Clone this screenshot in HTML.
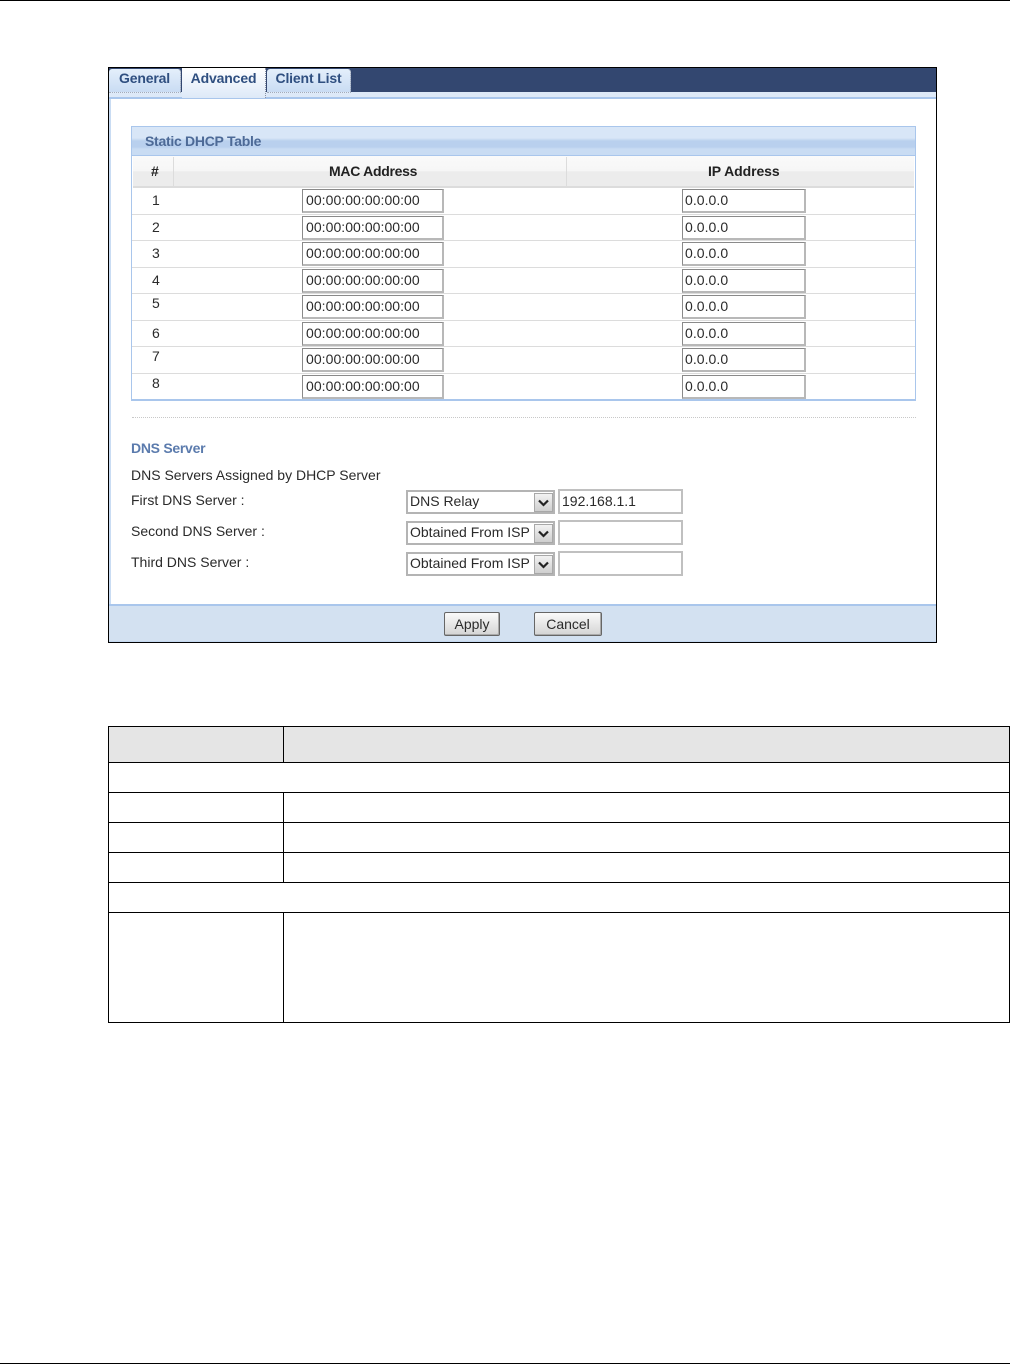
<!DOCTYPE html>
<html>
<head>
<meta charset="utf-8">
<style>
html,body{margin:0;padding:0;background:#fff;width:1010px;height:1364px;overflow:hidden}
body{position:relative;font-family:"Liberation Sans",sans-serif;font-size:14px;color:#2a2a2a}
div,span{position:absolute;box-sizing:border-box}
.wrap{left:0;top:0;width:1010px;height:660px;filter:blur(.3px)}
.t{white-space:nowrap;line-height:16px}
.b{font-weight:bold;letter-spacing:-.28px}
.inp{height:24px;background:#fff;border:1px solid #8a8a8a;border-right:2px solid #b8b8b8;border-bottom:2px solid #b8b8b8;padding-top:2px;line-height:16px;white-space:nowrap;letter-spacing:.05px}
.mac{left:302px;width:142px;padding-left:3px}
.ip{left:682px;width:124px;padding-left:2px}
.hl{left:132px;width:783px;height:1px;background:#dcdcdc}
.k{height:1px;background:#000}
.v{width:1px;background:#000}
.sel{left:406px;width:149px;height:24px;background:#fff;border:2px solid #b4b4b4;padding:2px 0 0 2px;line-height:15px;white-space:nowrap}
.arr{top:1px;right:0;width:19px;height:19px;background:linear-gradient(#f2f2f2,#cfcfcf);border:1px solid #a8a8a8}
.tx{left:558px;width:125px;height:25px;background:#fff;border:2px solid #c0c0c0;padding:2px 0 0 2px;line-height:16px;white-space:nowrap}
.tab{top:69px;height:24px;background:linear-gradient(#e4effb,#c9dcf3);border-right:1px dotted #8a93a5;border-bottom:1px dotted #a3abba;color:#2f4f80;font-weight:bold;letter-spacing:-.15px;text-align:center;line-height:19px;white-space:nowrap;border-radius:3px 3px 0 0}
.btn{top:612px;height:24px;background:linear-gradient(#fafafa,#d4d4d4);border:1px solid #666;border-radius:2px;box-shadow:inset -1px -1px 0 #aaa;text-align:center;line-height:23px}
</style>
</head>
<body>
<div class="k" style="left:0;top:0;width:1010px"></div>
<div class="k" style="left:0;top:1363px;width:1010px"></div>

<div class="wrap">
<div style="left:109px;top:68px;width:828px;height:24px;background:#334770"></div>
<div style="left:109px;top:92px;width:828px;height:5px;background:#dde9f8"></div>
<div style="left:109px;top:97px;width:828px;height:2px;background:#a9c6ec"></div>
<div style="left:109px;top:99px;width:2px;height:505px;background:#c9dcf3"></div>

<div class="tab" style="left:109px;width:72px">General</div>
<div style="left:182px;top:68px;width:84px;height:30px;background:linear-gradient(#fff,#dde9f8);border-right:1px dotted #8a93a5;color:#2f4f80;font-weight:bold;letter-spacing:-.15px;text-align:center;line-height:21px;white-space:nowrap">Advanced</div>
<div class="tab" style="left:267px;width:84px">Client List</div>

<!-- Static DHCP panel -->
<div style="left:131px;top:126px;width:785px;height:275px;border:1px solid #a9c6ec;border-bottom-width:2px;background:#fff"></div>
<div style="left:132px;top:127px;width:783px;height:29px;background:linear-gradient(#d8e6f7 0,#d8e6f7 11px,#b9d0ee 14px,#b9d0ee 20px,#c9dcf3 22px,#c9dcf3 100%);border-bottom:1px solid #a9c6ec"></div>
<div class="t b" style="left:145px;top:133px;color:#4d6a97">Static DHCP Table</div>
<div style="left:133px;top:156px;width:781px;height:32px;background:linear-gradient(#fafafa 0,#f6f6f6 50%,#ececec 52%,#ececec 100%);border-bottom:2px solid #dcdcdc"></div>
<div style="left:173px;top:157px;width:1px;height:30px;background:#dcdcdc"></div>
<div style="left:566px;top:157px;width:1px;height:30px;background:#dcdcdc"></div>
<div class="t b" style="left:151px;top:163px;color:#222">#</div>
<div class="t b" style="left:329px;top:163px;color:#222">MAC Address</div>
<div class="t b" style="left:708px;top:163px;color:#222;letter-spacing:-.08px">IP Address</div>

<div class="hl" style="top:214px"></div>
<div class="hl" style="top:240px"></div>
<div class="hl" style="top:267px"></div>
<div class="hl" style="top:293px"></div>
<div class="hl" style="top:320px"></div>
<div class="hl" style="top:346px"></div>
<div class="hl" style="top:373px"></div>

<div class="t" style="left:152px;top:192px">1</div>
<div class="t" style="left:152px;top:219px">2</div>
<div class="t" style="left:152px;top:245px">3</div>
<div class="t" style="left:152px;top:272px">4</div>
<div class="t" style="left:152px;top:295px">5</div>
<div class="t" style="left:152px;top:325px">6</div>
<div class="t" style="left:152px;top:348px">7</div>
<div class="t" style="left:152px;top:375px">8</div>

<div class="inp mac" style="top:189px">00:00:00:00:00:00</div>
<div class="inp mac" style="top:216px">00:00:00:00:00:00</div>
<div class="inp mac" style="top:242px">00:00:00:00:00:00</div>
<div class="inp mac" style="top:269px">00:00:00:00:00:00</div>
<div class="inp mac" style="top:295px">00:00:00:00:00:00</div>
<div class="inp mac" style="top:322px">00:00:00:00:00:00</div>
<div class="inp mac" style="top:348px">00:00:00:00:00:00</div>
<div class="inp mac" style="top:375px">00:00:00:00:00:00</div>

<div class="inp ip" style="top:189px">0.0.0.0</div>
<div class="inp ip" style="top:216px">0.0.0.0</div>
<div class="inp ip" style="top:242px">0.0.0.0</div>
<div class="inp ip" style="top:269px">0.0.0.0</div>
<div class="inp ip" style="top:295px">0.0.0.0</div>
<div class="inp ip" style="top:322px">0.0.0.0</div>
<div class="inp ip" style="top:348px">0.0.0.0</div>
<div class="inp ip" style="top:375px">0.0.0.0</div>

<div style="left:132px;top:417px;width:784px;height:1px;border-top:1px dotted #c8c8c8"></div>

<div class="t b" style="left:131px;top:440px;color:#5b7bad">DNS Server</div>
<div class="t" style="left:131px;top:467px">DNS Servers Assigned by DHCP Server</div>
<div class="t" style="left:131px;top:492px">First DNS Server :</div>
<div class="t" style="left:131px;top:523px">Second DNS Server :</div>
<div class="t" style="left:131px;top:554px">Third DNS Server :</div>

<div class="sel" style="top:490px">DNS Relay<span class="arr"><svg width="17" height="17" style="position:absolute;left:0;top:0"><path d="M4 6.500l4.500 4.500L13 6.500" fill="none" stroke="#222" stroke-width="2.200"/></svg></span></div>
<div class="sel" style="top:521px">Obtained From ISP<span class="arr"><svg width="17" height="17" style="position:absolute;left:0;top:0"><path d="M4 6.500l4.500 4.500L13 6.500" fill="none" stroke="#222" stroke-width="2.200"/></svg></span></div>
<div class="sel" style="top:552px">Obtained From ISP<span class="arr"><svg width="17" height="17" style="position:absolute;left:0;top:0"><path d="M4 6.500l4.500 4.500L13 6.500" fill="none" stroke="#222" stroke-width="2.200"/></svg></span></div>
<div class="tx" style="top:489px">192.168.1.1</div>
<div class="tx" style="top:520px"></div>
<div class="tx" style="top:551px"></div>

<!-- Footer -->
<div style="left:109px;top:604px;width:828px;height:38px;background:#d3e1f1;border-top:2px solid #a9c6ec;box-shadow:inset 0 -1px 0 #c4d8f0"></div>
<div class="btn" style="left:444px;width:56px">Apply</div>
<div class="btn" style="left:534px;width:68px">Cancel</div>
</div>

<!-- Frame -->
<div style="left:108px;top:67px;width:829px;height:576px;border:1px solid #000"></div>

<!-- Lower table -->
<div style="left:109px;top:727px;width:900px;height:35px;background:#e5e5e5"></div>
<div class="k" style="left:108px;top:726px;width:902px"></div>
<div class="k" style="left:108px;top:762px;width:902px"></div>
<div class="k" style="left:108px;top:792px;width:902px"></div>
<div class="k" style="left:108px;top:822px;width:902px"></div>
<div class="k" style="left:108px;top:852px;width:902px"></div>
<div class="k" style="left:108px;top:882px;width:902px"></div>
<div class="k" style="left:108px;top:912px;width:902px"></div>
<div class="k" style="left:108px;top:1022px;width:902px"></div>
<div class="v" style="left:108px;top:726px;height:297px"></div>
<div class="v" style="left:1009px;top:726px;height:297px"></div>
<div class="v" style="left:283px;top:726px;height:36px"></div>
<div class="v" style="left:283px;top:792px;height:90px"></div>
<div class="v" style="left:283px;top:912px;height:110px"></div>
</body>
</html>
